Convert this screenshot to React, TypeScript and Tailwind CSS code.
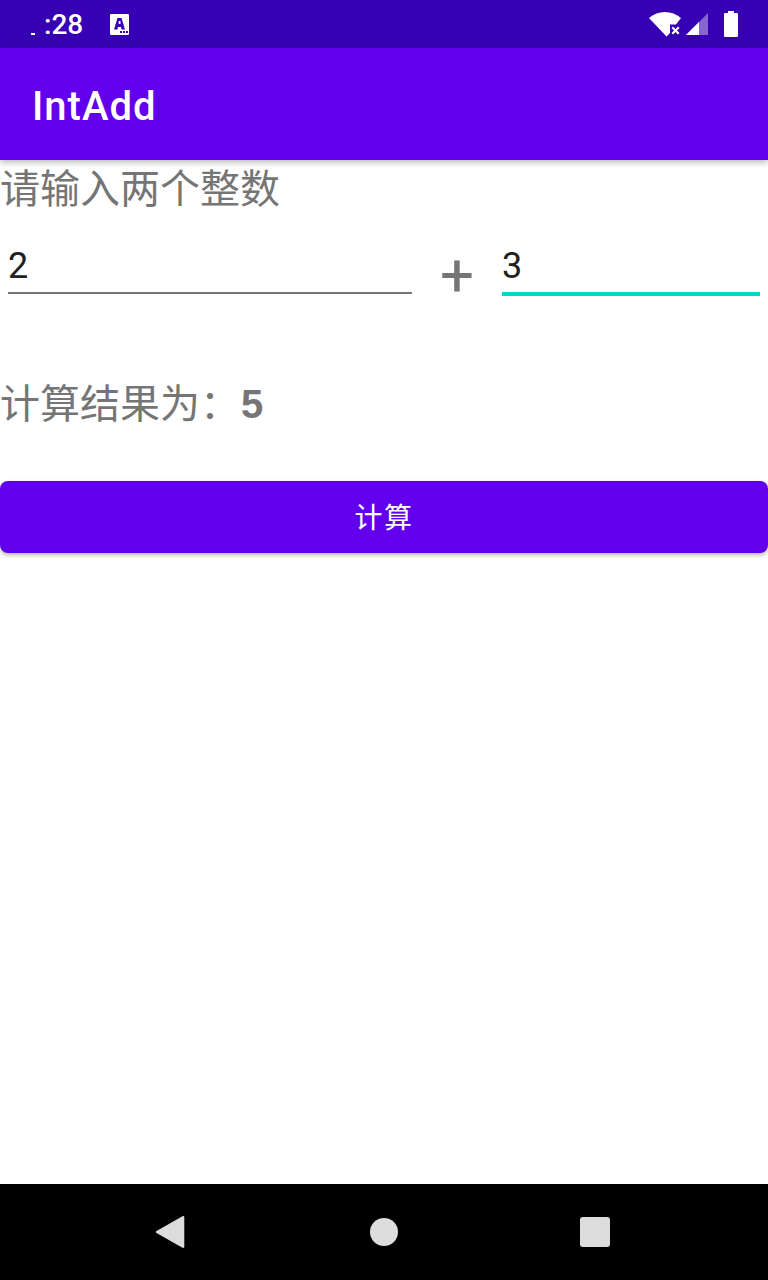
import React from 'react';

const cjk = "font-['Roboto','Noto_Sans_CJK_SC',sans-serif]";

const StatusBar = () => (
  <div className="h-12 shrink-0 bg-[#3700b3] flex items-center text-white relative">
    <div className="w-[30px] h-12 shrink-0 relative">
      <div className="absolute left-[31px] top-[33px] w-[4px] h-[2px] bg-white" />
    </div>
    <span className="ml-[14px] w-[40px] text-[28px] leading-[48px] font-medium mt-[2px] font-['Roboto',sans-serif]">:28</span>
    <svg className="ml-[26px] shrink-0" width="19" height="21" viewBox="0 0 19 21">
      <path d="M1 0h17a1 1 0 0 1 1 1v19a1 1 0 0 1-1 1H1a1 1 0 0 1-1-1V1a1 1 0 0 1 1-1z" fill="#fff" />
      <path d="M7.500 4h4l3.500 11.500h-3.500l-.5-2.500H8l-.5 2.500H4z" fill="#3700b3" />
      <rect x="8.700" y="7" width="1.800" height="3" fill="#fff" />
      <rect x="10" y="17" width="2" height="2" fill="#3700b3" />
      <rect x="13" y="17" width="2" height="2" fill="#3700b3" />
      <rect x="16" y="17" width="2" height="2" fill="#3700b3" />
    </svg>
    <div className="ml-auto flex items-center mr-[30px]">
      <svg className="shrink-0" width="34" height="26" viewBox="0 0 34 26">
        <path d="M0 7C4.500 3 10 1 16 1s11.500 2 16 6l-5 6.500h-6V22l-3.500 3.500z" fill="#fff" />
        <path d="M24 15.500l2.500 2.500 2.500-2.500 1.500 1.500-2.500 2.500 2.500 2.500-1.500 1.500-2.500-2.500-2.500 2.500-1.500-1.500 2.500-2.500-2.500-2.500z" fill="#fff" />
      </svg>
      <svg className="ml-[2px] shrink-0" width="24" height="24" viewBox="0 0 24 24">
        <path d="M23 1v22H1z" fill="#fff" fillOpacity="0.4" />
        <path d="M14 10v13H1z" fill="#fff" />
      </svg>
      <svg className="ml-[15px] shrink-0" width="14" height="26" viewBox="0 0 14 26">
        <path d="M4 0h6v2h3a1 1 0 0 1 1 1v22a1 1 0 0 1-1 1H1a1 1 0 0 1-1-1V3a1 1 0 0 1 1-1h3z" fill="#fff" />
      </svg>
    </div>
  </div>
);

const NavBar = () => (
  <div className="h-24 shrink-0 bg-black flex items-center pl-[155px]">
    <svg className="shrink-0" width="30" height="34" viewBox="0 0 30 34">
      <path d="M27.500 1.300c.8-.5 1.800 0 1.800 1v29.400c0 1-1 1.500-1.800 1L1.500 18c-.9-.5-.9-1.500 0-2z" fill="#dcdcdc" />
    </svg>
    <div className="ml-[185px] w-7 h-7 shrink-0 rounded-full bg-[#dcdcdc]" />
    <div className="ml-[182px] w-[30px] h-[30px] shrink-0 rounded-[3px] bg-[#dcdcdc]" />
  </div>
);

export default function App() {
  return (
    <div className={`w-[768px] h-[1280px] bg-white flex flex-col overflow-hidden ${cjk}`}>
      <StatusBar />
      <div className="h-28 shrink-0 bg-[#6200ee] flex items-center pl-8 shadow-[0_3px_6px_rgba(0,0,0,0.25)] relative z-10">
        <span className="text-white text-[40px] font-medium mt-[6px] font-['Roboto',sans-serif] tracking-[1px]">IntAdd</span>
      </div>

      <div className="flex-1 flex flex-col">
        <div className="text-[40px] leading-[56px] text-[#757575] pt-[2px] h-[56px]">请输入两个整数</div>

        <div className="flex items-start mt-[14px] h-[66px]">
          <div className="ml-2 w-[404px] h-[64px] border-b-2 border-[#757575] text-[36px] leading-[72px] text-[#212121] font-['Roboto',sans-serif]">2</div>
          <div className="w-[90px] text-center text-[60px] font-normal leading-[66px] mt-[13px] text-[#757575] font-['Roboto',sans-serif]">+</div>
          <div className="w-[258px] h-[66px] border-b-4 border-[#03dac5] text-[36px] leading-[72px] text-[#212121] font-['Roboto',sans-serif]">3</div>
        </div>

        <div className="mt-[78px] h-[56px] flex items-center text-[40px] leading-[56px] text-[#757575] pt-[5px]">
          <span>计算结果为：</span>
          <span className="font-bold font-['Liberation_Sans',sans-serif] ml-[1px] mb-[2px]">5</span>
        </div>

        <button className="mt-[51px] h-[72px] w-full rounded-lg bg-[#6200ee] text-white text-[28px] tracking-[1.500px] pt-[4px] shadow-[0_2px_4px_rgba(0,0,0,0.3)]">
          计算
        </button>
      </div>

      <NavBar />
    </div>
  );
}
